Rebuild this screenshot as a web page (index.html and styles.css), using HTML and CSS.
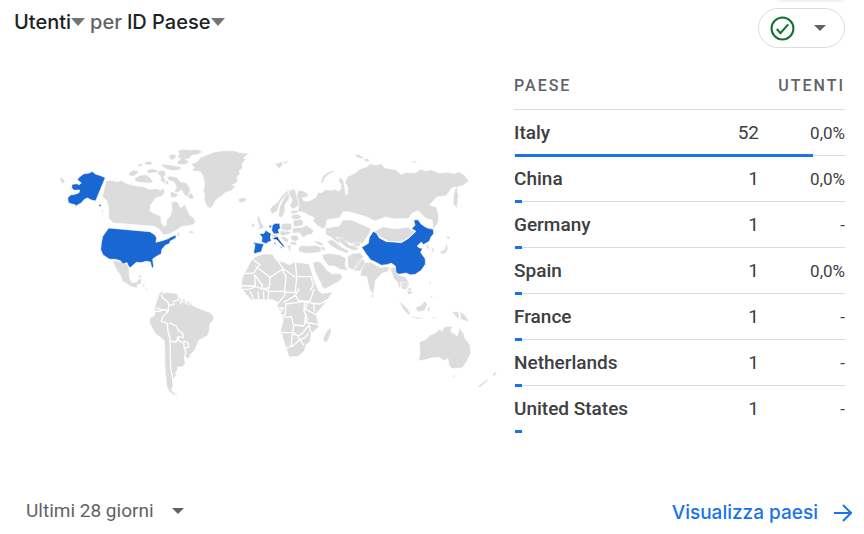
FILE: index.html
```html
<!DOCTYPE html>
<html lang="it">
<head>
    <meta charset="UTF-8">
    <meta name="viewport" content="width=device-width, initial-scale=1.0">
    <title>Utenti per ID Paese</title>
    <link rel="stylesheet" href="styles.css">
</head>
<body>
    <div class="card">
        <header class="card-header">
            <h1 class="title">
                <button class="title-btn">Utenti<svg class="caret" viewBox="0 0 14 8"><path d="M0 0h14L7 8z"/></svg></button>
                <span>per</span>
                <button class="title-btn">ID Paese<svg class="caret" viewBox="0 0 14 8"><path d="M0 0h14L7 8z"/></svg></button>
            </h1>
            <button class="status" aria-label="Qualità dei dati">
                <svg class="check" viewBox="0 0 24 24"><circle cx="12" cy="12" r="10.500"/><path d="M6.500 12.500l3.500 4 7.500-8.500"/></svg>
                <svg class="caret-small" viewBox="0 0 12 6"><path d="M0 0h12L6 6z"/></svg>
            </button>
        </header>

        <main class="content">
            <!-- World map -->
            <svg class="map" viewBox="0 140 500 260" role="img" aria-label="Mappa degli utenti per paese">
                <!-- North America -->
                <g transform="translate(50 140) scale(.33333)">
                    <path d="M168 122l14-1 22 4 8-4 20 10 18 5 30 4 20 8 20-2 14 5 6-10 4 16-8 12-18 4-16 22-2 18 14 8 18 6 2 22 8 10 8-4 0-16 10-10 6-18-2-22 8-6 12 4 6 14 6 0 8-10 8 20 8 14 12 10 5 12-10 8-30 4-22 14-18 10-18 2-8-14-18-12-122-10-14-12-2-40-4-14-14-12z"/>
                    <path d="M186 360l28 6 16 6 8 14 0 26 8 16 14-2 4-8 12-2-4 18-10 0 0 10-18-4-26-16-6-16-14-22z"/>
                    <path d="M236 100l14-10 14 2 0 8-12 8-14 0zM254 114l16-8 18-2 10 8 12 12-8 6-26-2-20-4zM290 90l16-4 22 6-10 6-24 2zM264 74l12-4 2 6-12 6zM282 68l16-6 12 6-10 8-14-2zM322 100l8-10 14 2 4 12-8 8 10 8-6 12-12-10 0-12zM344 122l12 0 0 10-10 2zM334 72l22 2 24 4 16 4-6 8-24 2-20-6-10-8zM356 48l10-6 14 4-6 12-12 2zM382 32l18-4 22 2 20-2 16 8-16 8-16 2-8 10-12 2 12 6-12 10-18 0-8-6 12-12-10-4 6-10zM350 112l10-4 22 4 8 12 18 4 12 16 0 14-8 12-8-4-10-16-12 8-10-4 8-12-8-16-14-4zM362 154l14 4 10 8-14 8-12-4zM418 158l10 4 4 14-10 2-10-8zM382 278l8-2-2 12-8 2zM416 274l8-2 10 5-10 4-6-2z"/>
                    <path d="M422 72l14-4 8-6 8-10 20-8 20-8 28-4 32 0 20 6 26 2-18 14 8 4-12 14 2 12-10 8 2 10-10 8 4 10-4 8-14 8 12 2-14 14-18 6-14 12-14 10-8 14-8 12-12-8-8-20 2-14-4-10 4-20-4-24-8-14-10-2-20-2 12-8z"/>
                    <path d="M566 176l10-3 14 2-2 8-12 5-10-3zM30 118l6-8 4 8 6 6-8 8-6-8zM154 208l6 2 0 8-4 2zM158 222l6 8-4 2z"/>
                    <path class="active" d="M66 133l18-2 2 4 8-6-12-10 6-8 14-10 16-2 6-4 8 2 2 4 18 6 14 6-29 70-14-3-10-6-10 4-8 10-14 8-5 8 1-9-12-3-10-4-2-14 8-9 14-2 12-5 2-8-16 1-8-6z"/>
                    <path class="active" d="M148 192l6 2-2 6-6-2z"/>
                    <path class="active" d="M176 264l124 11 14 9 6 9-2 14 18-5 18-6 10-6 14-5 0 9-18 10 0 6-14 6-10 12-2 13-14 8-12 8 3 22-5 7-5-20-12-2-16 4-14-1-18 16-6-5-4-10-12 4-8-10-16-4-16 0-20-13-7-16 2-20 4-20z"/>
                    <path d="M268 404l6 6-4 6-6-8zM278 432l6 2 0 8-6-2zM286 444l6 2 0 6-6-2z"/>
                </g>
                <!-- South America -->
                <g transform="translate(140 270) scale(.33333)">
                    <path d="M58 70l8-6 4 6 12-3 30 4 4 16 14 10 20-2 8 12 28 12 24 8 12 14-2 10-10 10-2 22-6 14-14 8-12 6-6 16-6 14-12 12-6 14-14-2 4 16-10 10-14 0 0 10-6 8 4 6-10 12 0 22-6 8 4 8 12 8-8 2-14-10-8-16-3-32-3-40 1-30-2-34-12-12-14-8-12-22-6-12 0-14 16-10-2-20z"/>
                    <path class="border" d="M64 72l4 12 14 10 6 12M88 106l14-2-2-10 18-6M120 90l4 14M136 92l2 12M150 98l-4 8M36 124l24 0 4-8M48 112l16 8 16 0 0 10-12 10-4 14 18 6M86 106l-2 22M82 158l2 28 6 14M88 158l20 10 8 14 12 8 2 12-16-2-6 16-20-2M114 202l2 10 16 8 0 14 14-2-2-14-14-6M132 234l6 12-4 16 14 6M86 192l4 14 2 90 6 26 2 26 16 2"/>
                    <path d="M118 84l6 4-2 8-6-4zM128 86l8 4 0 8-8-2zM142 94l8 0-2 8-6-2zM110 370l4 6-6 0z"/>
                </g>
                <!-- Europe and Russia -->
                <g transform="translate(235 140) scale(.33333)">
                    <path d="M188 215l4-24-8-18 6-22 16 2 14 10-2 8-16 2 4 10 16 0 20-10 6-14 14-2 8-8 20 2 10-4 10 6 8-6 0-14-8-10 6-12 10 12 4 24 2 18 6-4 0-20-8-14 8-18 24-10 12-12 20-6 12-10 16 4 18-4 8 12 34 6 16 14 18-6 24 2 16-12 16 6 18-4 22 10 26-2 20 4 14-6 16 10 14 18-18 14-18 4 4 28-4 36-12-14 2-28 6-22-12 4-16 22-28 4-22 24 20 6 6 20 0 26-16 24-2-30-20-6-22-22-18 6-10 16-44 2-26-6-32 12-30-14-50-14-16 0-10 18-38 6-4 22-8 6-16-10-14-14 4-10-20-8-12-8z"/>
                    <path d="M272 264l40-6 12-18 26 0 32 14 28 12-10 20-18 26-32 0-20-10-20 8-22-18-16-8z"/>
                    <path d="M104 210l8-12 14-10 14-20 18-16 14-6 12 4-20 6-16 14-14 20-6 22-16 10z"/>
                    <path d="M130 228l4-28 16-32 10-8 6 6-8 18-8 10 0 20-10 20z"/>
                    <path d="M164 168l-4-14 20-6 6 22 6 26-18 12-10-10 8-18z"/>
                    <path d="M258 130l4-20 14-12 22-8 0 5-18 9-12 12-4 14zM118 72l14-4 10-4 2 10-12 12-6-8zM144 66l14-4 2 4-12 6zM358 42l14 2 14 8-4 4-14-2zM386 56l14 0 4 8-12 2zM524 66l14-3 12 2-10 4z"/>
                    <path d="M66 228l8 2 4 16 8 12-2 8-18 2 8-8-6-14zM50 252l8-4 2 12-10 2z"/>
                    <path d="M168 212l20-2 0 10-20 2zM170 226l18-4 12 8-10 10-20-4zM174 242l22-6 10 10-4 12-26 2zM140 250l28 0 4 18-16 6-18-6zM172 264l30-2 12-6 22 14-4 12-18 4-8 8-14-16-20 2zM138 272l28 2 0 8-22 6-10-6zM166 288l20-4 6 14-12 8-12-8zM134 290l14 0 12 8 0 10-12-4zM166 304l20 2-2 10-18-2zM156 316l14-2-4 14 6 8-10-4zM108 282l20 2 2 6-18 4z"/>
                    <path d="M190 324l10-8 22 2 20-2 18 6-2 14-28 4-22 0-18-6zM234 302l18 2 14 8-2 6-14-4zM254 318l14 2 4 14-10-4z"/>
                    <path class="active" d="M112 256l8-6 14 0 2 15-6 4 3 12-16 1-7-10z"/>
                    <path class="active" d="M102 258l8-4-1 10-7-2z"/>
                    <path class="active" d="M73 281l14-1 5-9 10 6 7 4-3 10 3 12-9 3-6 5-14-4 1-15z"/>
                    <path class="active" d="M53 307l16 2 18 3-4 10-4 14-12 2-8 4-3-6 4-22z"/>
                    <path class="active-dark" d="M112 297l8-6 9-1 3 8 16 20 2 6-6-4-18-20z"/>
                    <path class="active-dark" d="M134 320l8 2-2 4zM118 306l4 0 0 8-4-1z"/>
                </g>
                <!-- Asia -->
                <g transform="translate(340 150) scale(.33333)">
                    <path d="M104 244l26-14 34 6 42-4 10 10 10 2-24 22-18 10-38-2-26-14z"/>
                    <path d="M70 338l22-2 28 16 30-2-8 16-16 4-20 22-6 42-12-18-8-36-20-2z"/>
                    <path d="M150 354l16-2 10 24 20 4 12 20-10 12-12-12-8 16-6-20-10-10zM256 280l10 4 2 12-6 2zM274 290l6 4 4 12-6 2zM322 256l8 6-2 6-8-2zM320 276l4 20-8 14-14 2-2-6 14-8zM180 396l20 2 8 10-12 12-10-4zM200 420l12 0 6 10-14 4zM94 432l8 4-2 8-6-2z"/>
                    <path d="M-40 274l16-6 30 24 22 10-8 8-26-10-20-12zM-12 262l20 2 22 22 18 0 10 12-16 4-24-10-18-16zM36 280l26-2 0 8-16 6z"/>
                    <path class="active" d="M65 292l20-12 3-18 12-18 10 6 8 14 22 11 22 1 22 2 20-12 24-22-13-8 10-10-4-16 13-1 10 14 16 10 20 5 1 13-8 10-5 13-18 10-6-8-12 12 6 6 10 1-6 12 14 20 0 16-12 18-18 12-14 2-14-6-20 4-10-5-2-20-12-8-14 4-16 2-18-10-14-6-15-20z"/>
                </g>
                <!-- Africa and Middle East -->
                <g transform="translate(230 240) scale(.33333)">
                    <path d="M76 50l24-8 28 0 6 12 8 10 18 2 18 8 16-8 44 6 4 14 12 40 12 26 10 8 32-4-18 28-20 24-12 14 6 24 2 16-22 18-4 26-12 8-4 18-18 16-28 4-6-16-12-36-8-28 8-32-10-28-10-10 4-14-20-10-18 2-22-2-20 2-30-34 2-32 14-26 12-24z"/>
                    <path class="border" d="M70 60l20 14-20 26-34 0M76 78l44 34 40-26-14-20M120 112l-2 30-24 6 4-10-24-34M74 104l2 34-42 0M196 66l4 44 48 0M160 86l36 26M158 90l10 20-4 44-50 0 4-12M200 110l-4 48-32-2M34 148l22 0 20-8 28 8 12 6-2 28M60 154l12 26M84 154l2 28M100 154l2 26M144 190l20-24 0-12M160 188l36-22 12-20M196 166l10 16 34 2 12-36M244 112l6 24-10 16M206 182l26 6 38 4 24-14M168 188l-2 36-18 6M168 192l56-8-2 28 10 26-12 20-30-4-6-24-24 2M232 188l-6 20 38 18M250 190l4 24M228 222l-4 24 40 8M156 278l32 0 4-24M190 278l14 10 14-8 14-20 10 0M186 282l-2 36-18 8M188 282l16 4 4 14-24 22M208 300l16-6 12-14M210 298l12 18M236 252l4 20 6 8M142 204l18 0-10 14"/>
                    <path d="M300 262l4 14-12 30-10 0-2-12 6-14zM248 68l16-4 12 6 16 22 16 10 22-2 8 12-10 12-44 24-8-8-6-16-14-26zM276 44l20-4 32 4 20 10-2 22 8 16-24-4-18-10-16 0-16-20zM352 50l16-10 20-2 14 12-10 12-6 14-18 14-14-8zM382 68l12-12 10 4 0 14-14 20-20-2z"/>
                </g>
                <!-- Oceania -->
                <g transform="translate(360 270) scale(.33333)">
                    <path d="M178 216l20-8 14-14 14-4 12-12 8 6 8-14 20-2 2 4-4 12 20 14 4-14 4-16 6 18 6 4 2 14 16 20 2 26-12 26-14 18-28 2-10-6-4-24-12 6-14-10-24 2-20 6-18 2 4-24z"/>
                    <path d="M115 92l16 12 14 16 6 12-4 4-16-16zM168 110l12-2 14-14 8 8-8 20-18 4-8-8zM204 108l6 6-2 12-6-4zM276 126l20-2 2 26-10-10zM300 124l16 12 12 20-26-8zM152 138l28 4 18 2-22 3-22-5zM216 142l14-2-2 4-12 2zM276 318l8-2-2 8zM352 350l32-24-2 8-22 18zM398 312l12-8-2 10-8 6zM208 34l6 2-2 8-4-2zM142 56l10-4 4 6-10 6zM210 78l8 0-4 8zM228 76l6 4-2 6z"/>
                </g>
            </svg>

            <!-- Users by country -->
            <table class="countries">
                <thead>
                    <tr><th scope="col">PAESE</th><th scope="col" colspan="2">UTENTI</th></tr>
                </thead>
                <tbody>
                    <tr><th scope="row">Italy<span class="bar" style="width: 90%"></span></th><td class="count">52</td><td>0,0%</td></tr>
                    <tr><th scope="row">China<span class="bar" style="width: 2%"></span></th><td class="count">1</td><td>0,0%</td></tr>
                    <tr><th scope="row">Germany<span class="bar" style="width: 2%"></span></th><td class="count">1</td><td>-</td></tr>
                    <tr><th scope="row">Spain<span class="bar" style="width: 2%"></span></th><td class="count">1</td><td>0,0%</td></tr>
                    <tr><th scope="row">France<span class="bar" style="width: 2%"></span></th><td class="count">1</td><td>-</td></tr>
                    <tr><th scope="row">Netherlands<span class="bar" style="width: 2%"></span></th><td class="count">1</td><td>-</td></tr>
                    <tr><th scope="row">United States<span class="bar" style="width: 2%"></span></th><td class="count">1</td><td>-</td></tr>
                </tbody>
            </table>
        </main>

        <footer class="card-footer">
            <button class="period">Ultimi 28 giorni <svg class="caret-small" viewBox="0 0 12 6"><path d="M0 0h12L6 6z"/></svg></button>
            <a class="more" href="#">Visualizza paesi <svg class="arrow" viewBox="0 0 18 18"><path d="M0 9h16M9 1l8 8-8 8"/></svg></a>
        </footer>
    </div>
</body>
</html>
```

FILE: styles.css
```css
body {
    font-family: Roboto, sans-serif;
    margin: 0;
    background-color: #fff;
    color: #3c4043;
}
button {
    font: inherit;
    color: inherit;
    background: none;
    border: none;
    padding: 0;
    cursor: pointer;
}
.card {
    box-sizing: border-box;
    min-height: 100vh;
    display: flex;
    flex-direction: column;
    padding: 8px 12px 8px 14px;
}
/* shadow of the toolbar above the card */
.card::before {
    content: "";
    position: absolute;
    top: -8px;
    right: 20px;
    width: 66px;
    height: 7px;
    box-shadow: 0 0 5px rgba(0, 0, 0, 0.2);
}
.card-header {
    display: flex;
    justify-content: space-between;
    align-items: flex-start;
    padding-right: 7px;
}
.title {
    display: flex;
    gap: 5px;
    margin: 0;
    font-family: Inter, Roboto, sans-serif;
    font-size: 20px;
    font-weight: 500;
    line-height: 28px;
    color: #5f6368;
}
.title-btn {
    display: flex;
    align-items: center;
    color: #202124;
}
.caret {
    width: 14px;
    height: 8px;
    fill: #757575;
}
.caret-small {
    width: 12px;
    height: 6px;
    fill: #5f6368;
}
.status {
    box-sizing: border-box;
    display: flex;
    align-items: center;
    gap: 19px;
    height: 40px;
    padding: 0 18px 0 11px;
    border: 1px solid #dadce0;
    border-radius: 20px;
}
.check {
    width: 25px;
    height: 25px;
    fill: none;
    stroke: #137333;
    stroke-width: 2;
}
.content {
    display: flex;
    align-items: flex-start;
    gap: 14px;
    padding: 16px 7px 0 0;
}
.map {
    flex: 500;
    min-width: 0;
    margin: 76px 0 0 -14px;
}
.map path {
    fill: #dcdcdc;
    stroke: #fff;
    stroke-width: 2;
    stroke-linejoin: round;
}
.map .border {
    fill: none;
    stroke-width: 4;
}
.map .active {
    fill: #1967d2;
}
.map .active-dark {
    fill: #174ea6;
}
.countries {
    flex: 331;
    display: table;
    border-collapse: collapse;
    font-size: 19px;
    line-height: 22px;
}
.countries th,
.countries td {
    padding: 0;
    text-align: right;
}
.countries th {
    font-weight: 500;
}
.countries th:first-child {
    text-align: left;
}
.countries thead th {
    height: 43px;
    padding-bottom: 2px;
    font-size: 16px;
    letter-spacing: 2px;
    color: #5f6368;
}
.countries tr {
    position: relative;
    border-bottom: 1px solid #dadce0;
}
.countries tbody tr:last-child {
    border-bottom: none;
}
.countries tbody th,
.countries tbody td {
    height: 45px;
}
.countries td {
    width: 86px;
    font-size: 17px;
}
.countries .count {
    font-size: 19px;
}
.bar {
    position: absolute;
    left: 1px;
    bottom: -2px;
    height: 3px;
    background-color: #1a73e8;
}
.card-footer {
    display: flex;
    justify-content: space-between;
    align-items: flex-start;
    margin-top: auto;
    padding-left: 12px;
}
.period {
    display: flex;
    align-items: center;
    gap: 18px;
    font-size: 19px;
    line-height: 22px;
    color: #5f6368;
}
.more {
    display: flex;
    align-items: center;
    gap: 16px;
    font-family: Inter, Roboto, sans-serif;
    font-size: 19px;
    font-weight: 500;
    line-height: 26px;
    color: #1a73e8;
    text-decoration: none;
}
.arrow {
    width: 18px;
    height: 18px;
    fill: none;
    stroke: #1a73e8;
    stroke-width: 2;
}
```
